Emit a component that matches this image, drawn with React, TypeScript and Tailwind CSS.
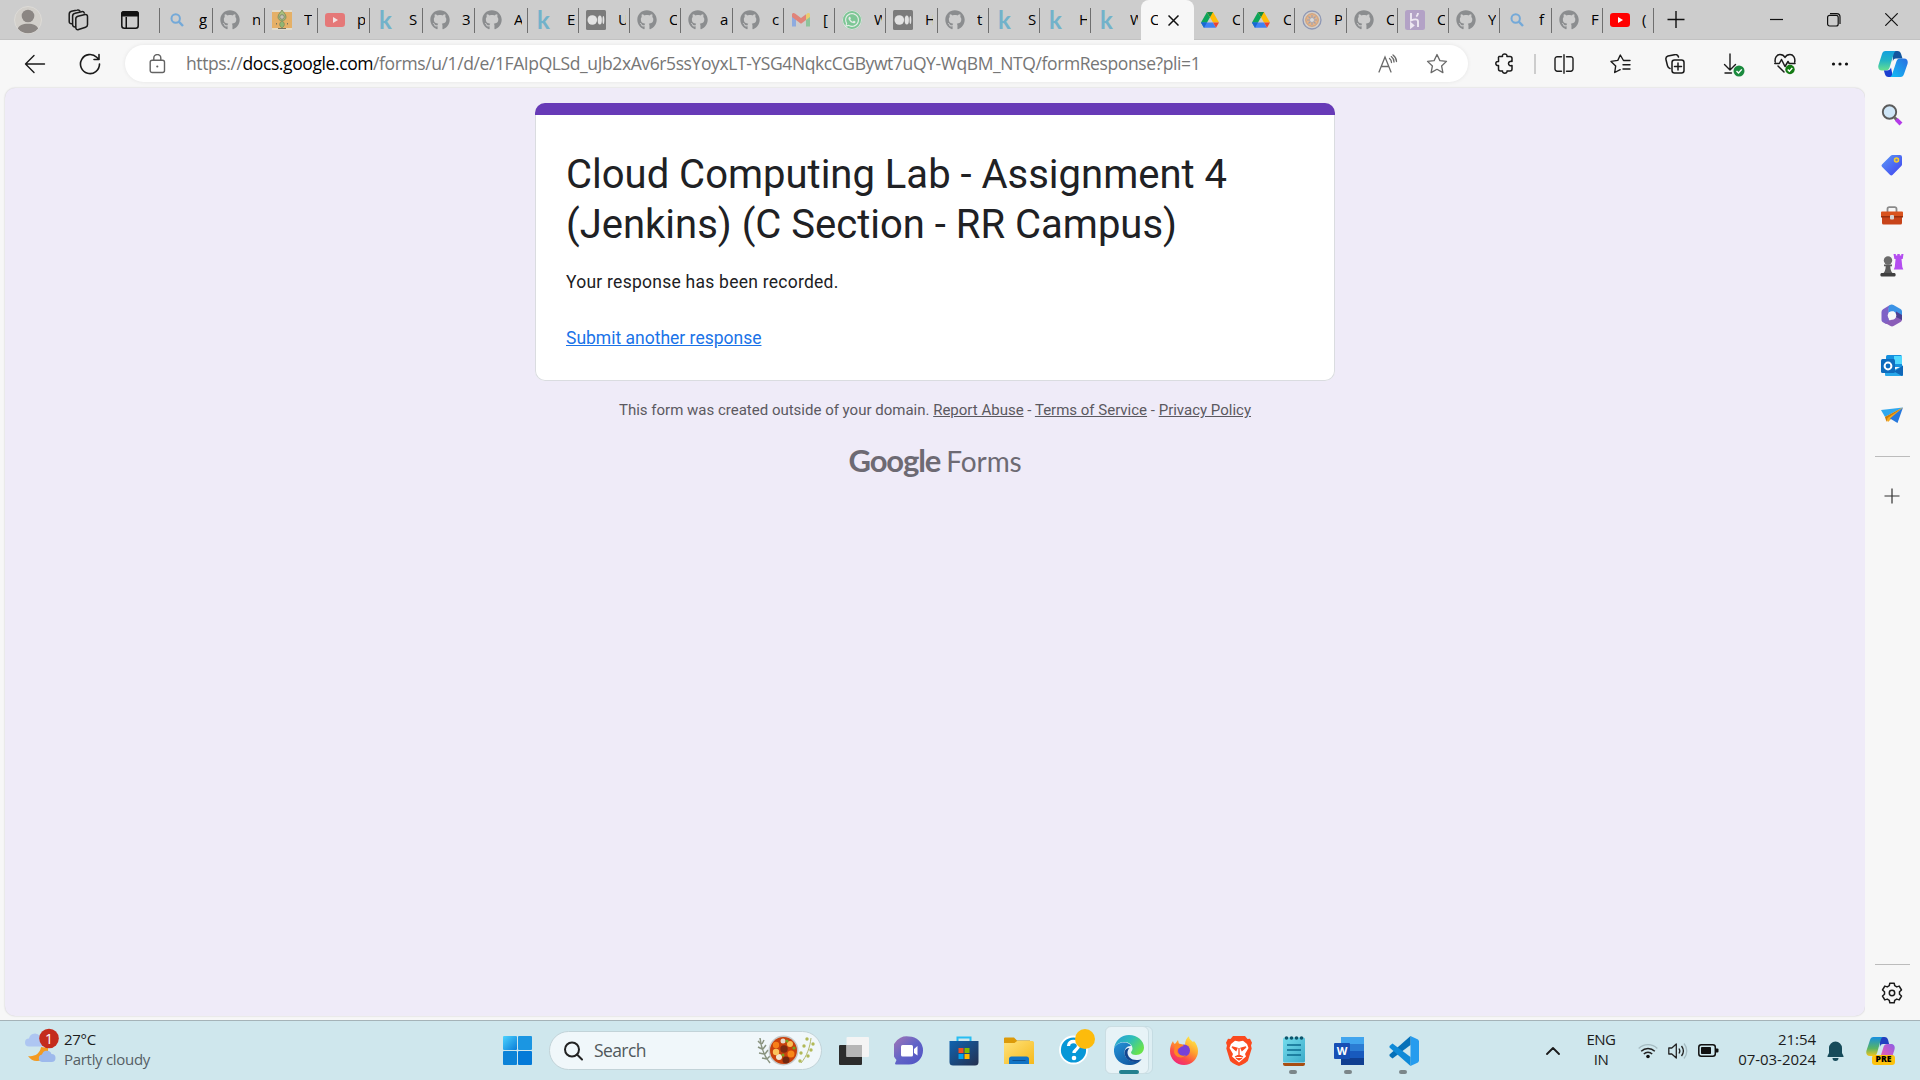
import React from "react";
import { FaGithub, FaWhatsapp } from "react-icons/fa";

type Kind = "search" | "github" | "jenkins" | "youtube" | "youtubeLive" | "k" | "medium" | "gmail" | "whatsapp" | "drive" | "seal" | "heroku";

function Favicon({ kind }: { kind: Kind }) {
  switch (kind) {
    case "search":
      return (
        <svg width="20" height="20" viewBox="0 0 20 20" fill="none" stroke="#74a9d8" strokeWidth="2">
          <circle cx="8.7" cy="8.5" r="4.2" />
          <path d="M11.8 11.6 16 16" strokeWidth="2.4" />
        </svg>
      );
    case "github":
      return <FaGithub size={20} color="#8b8d8f" />;
    case "jenkins":
      return (
        <svg width="20" height="20" viewBox="0 0 20 20">
          <path d="M0 0h20v20H0z" fill="#e3dccb" />
          <path d="M0 2h20v16H0z" fill="#e5b066" />
          <path d="M10 0c-1 2-4 4-4 7 0 2 2 4 4 4s4-2 4-4c0-3-3-5-4-7z" fill="#a9c07b" stroke="#75855b" strokeWidth=".8" />
          <path d="M10 11c-2 1-3 3-2 5l2 2 2-2c1-2 0-4-2-5z" fill="#92b571" stroke="#75855b" strokeWidth=".6" />
          <circle cx="10" cy="7" r="2.3" fill="#c4c3b4" stroke="#777b67" strokeWidth=".8" />
          <path d="M4.500 13v1.500M15.500 13v1.500M6 18.500h8" stroke="#74745f" />
        </svg>
      );
    case "youtube":
      return (
        <svg width="20" height="20" viewBox="0 0 20 20">
          <rect y="3" width="20" height="14" rx="3.2" fill="#e57878" />
          <path d="m8 7 5 3-5 3z" fill="#f4e4e4" />
        </svg>
      );
    case "youtubeLive":
      return (
        <svg width="20" height="20" viewBox="0 0 20 20">
          <rect y="3" width="20" height="14" rx="3.2" fill="#f00" />
          <path d="m8 7 5 3-5 3z" fill="#fff" />
        </svg>
      );
    case "k":
      return <span className="flex h-5 w-5 items-center pl-[2px] font-['Lato'] text-[24px] font-bold leading-none text-[#72b2ca]">k</span>;
    case "medium":
      return (
        <svg width="20" height="20" viewBox="0 0 20 20">
          <rect width="20" height="20" rx="1.5" fill="#7b7b7b" />
          <circle cx="6.3" cy="10" r="4.8" fill="#e2e2e2" />
          <ellipse cx="13.8" cy="10" rx="2.1" ry="4.5" fill="#e2e2e2" />
          <ellipse cx="17.4" cy="10" rx="0.9" ry="4" fill="#e2e2e2" />
        </svg>
      );
    case "gmail":
      return (
        <svg width="20" height="20" viewBox="0 0 20 20">
          <path d="M1 6v10.5h4V9z" fill="#8eabdf" />
          <path d="M19 6v10.5h-4V9z" fill="#8dc39b" />
          <path d="M15 5v5l4-3V4.500c0-1.700-1.800-2-3-1z" fill="#e9cc70" />
          <path d="M1 7V4.500c0-1.700 1.800-2 3-1l6 4.500 5-3.800V10l-5 3.700L5 10z" fill="#e08379" />
        </svg>
      );
    case "whatsapp":
      return (
        <span className="flex h-5 w-5 items-center justify-center rounded-full bg-[#7cc795] ring-1 ring-[#dedede] ring-inset">
          <FaWhatsapp size={16} color="#e6ece8" />
        </span>
      );
    case "drive":
      return (
        <svg width="20" height="20" viewBox="0 0 20 20">
          <path d="M7 2 1 12.500l3 5.300L10 7.200z" fill="#0da55a" />
          <path d="M13 2 19 12.500h-6L7 2z" fill="#ffbc05" />
          <path d="M7 2h6l-3 5.200z" fill="#128a46" />
          <path d="M1 12.500h12l3 5.300H4z" fill="#3f82f4" />
          <path d="M1 12.500h6l-3 5.300z" fill="#1967d2" />
          <path d="M13 12.500h6l-3 5.300z" fill="#ea4335" />
        </svg>
      );
    case "seal":
      return (
        <svg width="20" height="20" viewBox="0 0 20 20">
          <circle cx="10" cy="10" r="9" fill="#d3cec8" stroke="#8d97b5" strokeWidth="1.300" />
          <circle cx="10" cy="10" r="6.300" fill="#e3b48b" stroke="#cf9c74" />
          <path d="M10 5v10M5 10h10M6.500 6.500l7 7M13.500 6.500l-7 7" stroke="#9aa0b4" strokeWidth="1.100" />
          <circle cx="10" cy="10" r="2" fill="#dadada" />
        </svg>
      );
    case "heroku":
      return (
        <svg width="20" height="20" viewBox="0 0 20 20">
          <rect width="20" height="20" rx="2.500" fill="#b3a2c6" />
          <path d="M6 3v7.500c2.500-1.200 7-2.200 7 1V17M13 3c0 1.500-.8 2.800-1.700 3.600M6 13.500l2.300 1.900L6 17.300z" fill="none" stroke="#eee8f2" strokeWidth="1.900" />
        </svg>
      );
  }
}

const leftTabs: [Kind, string, string][] = [
  ["search", "g", "w-[54px]"],
  ["github", "n", "w-[52px]"],
  ["jenkins", "T", "w-[53px]"],
  ["youtube", "p", "w-[52px]"],
  ["k", "S", "w-[53px]"],
  ["github", "3", "w-[52px]"],
  ["github", "A", "w-[53px]"],
  ["k", "E", "w-[51px]"],
  ["medium", "U", "w-[51px]"],
  ["github", "C", "w-[51px]"],
  ["github", "a", "w-[52px]"],
  ["github", "c", "w-[51px]"],
  ["gmail", "[", "w-[51px]"],
  ["whatsapp", "W", "w-[51px]"],
  ["medium", "H", "w-[52px]"],
  ["github", "t", "w-[51px]"],
  ["k", "S", "w-[51px]"],
  ["k", "H", "w-[51px]"],
  ["k", "W", "w-[52px]"],
];
const rightTabs: [Kind, string, string][] = [
  ["drive", "C", "w-[51px]"],
  ["drive", "C", "w-[51px]"],
  ["seal", "P", "w-[52px]"],
  ["github", "C", "w-[51px]"],
  ["heroku", "C", "w-[51px]"],
  ["github", "Y", "w-[51px]"],
  ["search", "f", "w-[52px]"],
  ["github", "F", "w-[51px]"],
  ["youtubeLive", "(", "w-[51px]"],
];

function Tab({ kind, label, width, last }: { kind: Kind; label: string; width: string; last?: boolean }) {
  return (
    <div className={`flex h-[25px] shrink-0 items-start border-r pl-[7px] pt-[2px] ${last ? "border-transparent" : "border-[#6f6f6f]"} ${width}`}>
      <div className="h-5 w-5 shrink-0"><Favicon kind={kind} /></div>
      <span className="-mt-px ml-3 w-2 overflow-hidden whitespace-nowrap text-[15px] leading-5 text-black">{label}</span>
    </div>
  );
}

const line = { fill: "none", stroke: "#1b1b1b", strokeWidth: 1.4, strokeLinecap: "round", strokeLinejoin: "round" } as const;

function TabBar() {
  return (
    <header className="flex h-10 border-b border-[#c2c2c2] bg-[#cdcdcd]">
      <div className="flex w-[160px] items-center">
        <svg className="ml-[14px]" width="28" height="28" viewBox="0 0 28 28">
          <circle cx="14" cy="14" r="13.500" fill="#d2cfca" stroke="#dddbd7" />
          <circle cx="14" cy="10" r="6.300" fill="#8b8683" />
          <path d="M3.800 22.600C5 19.500 8.500 17.800 14 17.800s9 1.700 10.200 4.800A13.300 13.300 0 0 1 14 27.300 13.300 13.300 0 0 1 3.800 22.600z" fill="#8b8683" />
        </svg>
        <svg className="ml-[24px]" width="24" height="24" viewBox="0 0 24 24" {...line} strokeWidth="1.500">
          <path d="M12 8.200 19 6.600c1.500-.3 2.500.4 2.500 2v8.200c0 1.200-.7 2-1.900 2.400l-7 2.300c-1.600.5-2.800-.2-2.800-1.900v-8.800c0-1.400.8-2.300 2.200-2.600z" />
          <path d="M9.500 18.800c-1.800.4-2.900-.6-2.900-2.200V8.200c0-1.600 1-2.700 2.500-3l6.500-1.500c1.300-.3 2.300.2 2.700 1.400" />
          <path d="M6 15.700c-1.700.2-2.800-.7-2.800-2.300V6.200c0-1.500.9-2.500 2.300-2.900L11.300 2c1.200-.3 2.200.1 2.700 1.100" />
        </svg>
        <svg className="ml-[31px]" width="18" height="18" viewBox="0 0 18 18">
          <rect x=".8" y=".8" width="16.400" height="16.400" rx="2.500" fill="none" stroke="#111" strokeWidth="1.500" />
          <path d="M0 5.500V3a3 3 0 0 1 3-3h12a3 3 0 0 1 3 3v2.500zM4.500 5v12H6V5z" fill="#111" />
        </svg>
      </div>
      <div className="flex pt-2">
        <div className="-ml-px h-[25px] w-px bg-[#6f6f6f]" />
        {leftTabs.map(([k, l, w], i) => (
          <Tab key={i} kind={k} label={l} width={i === 0 ? "w-[53px]" : w} last={i === leftTabs.length - 1} />
        ))}
      </div>
      <div className="-ml-[2px] flex h-[41px] w-[53px] items-start rounded-t-lg bg-[#f7f7f7] pl-[9px] pt-[9px]">
        <span className="w-2 overflow-hidden text-[15px] leading-5 text-black">C</span>
        <svg className="ml-[10px] mt-[6px]" width="11" height="11" viewBox="0 0 11 11"><path d="m.5.5 10 10m0-10-10 10" stroke="#111" strokeWidth="1.500" /></svg>
      </div>
      <div className="-ml-px flex pt-2">
        {rightTabs.map(([k, l, w], i) => <Tab key={i} kind={k} label={l} width={w} />)}
      </div>
      <svg className="ml-[13px] mt-[11px]" width="18" height="18" viewBox="0 0 18 18"><path d="M9 0v17M.5 8.500h17" stroke="#111" strokeWidth="1.400" /></svg>
      <div className="ml-auto flex items-center pr-[22px]">
        <svg width="13" height="13" viewBox="0 0 13 13"><path d="M0 6.500h13" stroke="#111" strokeWidth="1.200" /></svg>
        <svg className="ml-[44px]" width="14" height="14" viewBox="0 0 14 14" fill="none" stroke="#111" strokeWidth="1.200">
          <rect x=".6" y="2.400" width="10.600" height="10.600" rx="2" />
          <path d="M3 .7h6.800a3.200 3.200 0 0 1 3.200 3.200V11" />
        </svg>
        <svg className="ml-[44px]" width="13" height="13" viewBox="0 0 13 13"><path d="m.3.3 12.400 12.400m0-12.400L.3 12.700" stroke="#111" strokeWidth="1.200" /></svg>
      </div>
    </header>
  );
}

function CopilotMark({ size }: { size: number }) {
  return (
    <svg width={size} height={size} viewBox="0 0 30 30">
      <defs>
        <linearGradient id="cpA" x1="0" y1="0" x2="0" y2="1"><stop offset="0" stopColor="#13a0dd" /><stop offset=".5" stopColor="#24b5c4" /><stop offset="1" stopColor="#67e08f" /></linearGradient>
        <linearGradient id="cpB" x1="0" y1="1" x2="1" y2="0"><stop offset="0" stopColor="#12c0f5" /><stop offset="1" stopColor="#2a6de0" /></linearGradient>
      </defs>
      <path d="M15 2h4.500c2 0 3 1 3.600 3l1.400 4.500H18c-2 0-2.600 1-3.200 3z" fill="#13569f" />
      <path d="M7.500 2H18c-1.500.6-2 2-2.600 4l-3.800 12.500c-.6 2-1.800 3-3.800 3H4C.8 21.500-.3 19 .5 16L4 5c.6-2 1.600-3 3.500-3z" fill="url(#cpA)" />
      <path d="M15 28h-4.500c-2 0-3-1-3.600-3l-1-3.500H9c2 0 3.400-1 4-3z" fill="#1b3fd0" />
      <path d="M22.500 28H12c1.500-.6 2-2 2.600-4l3.800-11.500c.6-2 1.800-3 3.800-3H26c3.200 0 4.300 2.500 3.500 5.500L26 25c-.6 2-1.600 3-3.500 3z" fill="url(#cpB)" />
    </svg>
  );
}

function ToolButton({ width, children }: { width: string; children: React.ReactNode }) {
  return <div className={`flex h-full shrink-0 items-center justify-center ${width}`}>{children}</div>;
}

function Toolbar() {
  return (
    <div className="flex h-[47px] items-center bg-[#f7f7f7]">
      <ToolButton width="w-[70px]">
        <svg width="22" height="20" viewBox="0 0 22 20" {...line}><path d="M20.500 10H1.500M10 1.500 1.500 10l8.500 8.500" /></svg>
      </ToolButton>
      <ToolButton width="w-10">
        <svg width="22" height="22" viewBox="0 0 22 22" {...line} strokeWidth="1.600"><path d="M20.500 11A9.500 9.500 0 1 1 17.700 4.300L20 6.500M20 1.500v5h-5" /></svg>
      </ToolButton>
      <div className="ml-[15px] flex h-[37px] w-[1343px] items-center rounded-full bg-white shadow-[0_0_4px_rgba(0,0,0,0.08)]">
        <svg className="ml-[24px]" width="17" height="20" viewBox="0 0 17 20" fill="none" stroke="#636363" strokeWidth="1.400">
          <rect x="1.200" y="6.200" width="14.300" height="12.300" rx="2" />
          <path d="M4.800 6V4a3.500 3.500 0 0 1 7 0v2" />
          <circle cx="8.300" cy="12.500" r="1.100" fill="#636363" stroke="none" />
        </svg>
        <span className="-mt-[2px] ml-[20px] w-[1020px] whitespace-nowrap text-[17.5px] leading-6 tracking-[-0.4px] text-[#767676]">
          https://<span className="text-black">docs.google.com</span>/forms/u/1/d/e/1FAIpQLSd_uJb2xAv6r5ssYoyxLT-YSG4NqkcCGBywt7uQY-WqBM_NTQ/formResponse?pli=1
        </span>
        <div className="ml-auto flex items-center gap-[28px] pr-[20px]">
          <svg width="20" height="20" viewBox="0 0 20 20" fill="none" stroke="#6a6a6a" strokeWidth="1.300" strokeLinecap="round">
            <path d="M1 18 7 3l6 15M3.200 12.500h7.600M11.500 4.500c1.300 1 2 2.400 2 4M13.300 2.600c1.700 1.300 2.700 3.200 2.700 5.400M15 1c2.200 1.700 3.500 4 3.500 6.500" />
          </svg>
          <svg width="22" height="22" viewBox="0 0 22 22" fill="none" stroke="#6a6a6a" strokeWidth="1.300" strokeLinejoin="round">
            <path d="m11 1.500 2.900 6.100 6.600.8-4.900 4.600 1.300 6.600-5.900-3.300-5.900 3.300L6.400 13 1.500 8.400l6.600-.8z" />
          </svg>
        </div>
      </div>
      <ToolButton width="w-[66px]">
        <svg className="ml-[7px]" width="20" height="21" viewBox="0 0 20 21" {...line} strokeWidth="1.500">
          <path d="M4 3.500h3.500C7 1.500 8.500.9 9.700.9s2.700.6 2.200 2.600H15a2 2 0 0 1 2 2v3c-2-.5-3.500.5-3.500 2s1.500 2.600 3.500 2v3.500a2 2 0 0 1-2 2h-3c.4 1.500-1 2.200-2.200 2.200S7.200 19.500 7.500 18H5.500a2 2 0 0 1-2-2v-3.500c-1.700.3-2.700-.8-2.700-2s1-2.300 2.700-2V5.500a2 2 0 0 1 .5-2z" />
        </svg>
      </ToolButton>
      <div className="h-5 w-[2px] bg-[#cdcdcd]" />
      <ToolButton width="w-14">
        <svg width="20" height="20" viewBox="0 0 20 20" {...line}><path d="M10 .7v18.600M7.500 2.700H3.200A2.200 2.200 0 0 0 1 5v10a2.200 2.200 0 0 0 2.200 2.200h4.300M12.500 2.700h4.300A2.200 2.200 0 0 1 19 5v10a2.200 2.200 0 0 1-2.200 2.200h-4.300" /></svg>
      </ToolButton>
      <ToolButton width="w-14">
        <svg width="21" height="20" viewBox="0 0 21 20" {...line}><path d="M20 6.500h-6.500L10.300 1 7.800 6.400 1 7.400l4.700 4.500-1 6.600 5.500-2.800M13 10.800h7M13 15h7" /></svg>
      </ToolButton>
      <ToolButton width="w-[54px]">
        <svg width="20" height="20" viewBox="0 0 20 20" {...line} strokeWidth="1.500"><rect x="7" y="6" width="12" height="13" rx="2.500" /><path d="M13 9v7M9.500 12.500h7M5 14.500C3.300 14 2.800 12.800 2.500 11.700L1 5.700C.6 4 1.500 2.500 3 2l6.500-1.300C11.500.3 13 1 13.500 3" /></svg>
      </ToolButton>
      <ToolButton width="w-14">
        <svg className="ml-[7px] mt-[3px]" width="22" height="24" viewBox="0 0 22 24">
          <path d="M7 1v16M1.500 11.500 7 17l5.500-5.500M2 20h6.500" {...line} />
          <circle cx="16" cy="18" r="5.500" fill="#1b8a3e" /><path d="m13.500 18 2 2 3.300-3.600" fill="none" stroke="#fff" strokeWidth="1.400" />
        </svg>
      </ToolButton>
      <ToolButton width="w-[54px]">
        <svg width="22" height="22" viewBox="0 0 22 22">
          <path d="M1.200 9C.5 4.500 3 1.500 6 1.500c2.200 0 4 1 5 3 1-2 2.800-3 5-3 3 0 5.500 3 4.700 7.500M.8 10.500h4.500l2.200-4 3.500 7 3-5 1.200 2H21M4 13l6 6" {...line} strokeWidth="1.500" />
          <circle cx="16" cy="16.500" r="4.700" fill="#137a13" /><path d="m13.700 16.500 1.700 1.700 2.900-3.200" fill="none" stroke="#fff" strokeWidth="1.400" />
        </svg>
      </ToolButton>
      <ToolButton width="w-14">
        <svg width="18" height="4" viewBox="0 0 18 4" fill="#111"><circle cx="2.500" cy="2" r="1.600" /><circle cx="9" cy="2" r="1.600" /><circle cx="15.500" cy="2" r="1.600" /></svg>
      </ToolButton>
      <ToolButton width="w-[50px]"><CopilotMark size={30} /></ToolButton>
    </div>
  );
}

function SideCell({ children }: { children: React.ReactNode }) {
  return <div className="flex h-[50px] items-center justify-center pr-px">{children}</div>;
}

function Sidebar() {
  return (
    <aside className="flex w-[55px] flex-col bg-[#f7f7f7] pt-[3px]">
      <SideCell>
        <svg width="22" height="22" viewBox="0 0 22 22">
          <path d="m13.500 13.500 2.500 2.500" stroke="#6b6b6b" strokeWidth="3" /><path d="m15.300 15.300 4.700 4.700" stroke="#b43be8" strokeWidth="4" />
          <circle cx="8.500" cy="8" r="6.700" fill="#cfe6f7" stroke="#5b5b5b" strokeWidth="1.900" />
        </svg>
      </SideCell>
      <SideCell>
        <svg width="22" height="22" viewBox="0 0 22 22">
          <defs><linearGradient id="tg" x1="0" y1="0" x2="1" y2="1"><stop stopColor="#5b9bf5" /><stop offset="1" stopColor="#4040f0" /></linearGradient></defs>
          <path d="M11.500 1H19a2 2 0 0 1 2 2v7.500a2 2 0 0 1-.7 1.500l-8.600 8.700a2 2 0 0 1-2.800 0L1.200 13a2 2 0 0 1 0-2.800L10 1.600A2 2 0 0 1 11.500 1z" fill="url(#tg)" />
          <circle cx="15.500" cy="6" r="2" fill="#7b86b8" stroke="#f8cf28" strokeWidth="1.500" />
        </svg>
      </SideCell>
      <SideCell>
        <svg className="mt-[2px]" width="24" height="20" viewBox="0 0 24 20">
          <path d="M7.500 6V3a1.800 1.800 0 0 1 1.800-1.800h5.400A1.800 1.800 0 0 1 16.500 3v3" fill="none" stroke="#8a8a8a" strokeWidth="1.800" />
          <path d="M2 8h20v9a1.500 1.500 0 0 1-1.500 1.500h-17A1.500 1.500 0 0 1 2 17z" fill="#c8441a" />
          <path d="M2 5.500h20a1 1 0 0 1 1 1V11H1V6.500a1 1 0 0 1 1-1z" fill="#d9531e" /><path d="M1 10h22v1.500H1z" fill="#98300f" />
          <rect x="10" y="9" width="4" height="4.500" rx="1" fill="#d4d4d4" />
        </svg>
      </SideCell>
      <SideCell>
        <svg width="24" height="24" viewBox="0 0 24 24">
          <path d="M13.500 1h2.300v1.500h1.500V1h2.500v1.500h1.500V1h2.200l-.8 5h-1.200l.8 8 1 2.500h-9.500l1-2.500.8-8h-1.200z" fill="#b44df0" />
          <circle cx="8" cy="7.500" r="4.200" fill="#6b6b6b" /><path d="M4 11.500h8v1.700h-1.700c0 3 .7 5 2.200 6.800h-9c1.500-1.800 2.200-3.800 2.200-6.800H4z" fill="#5a5a5a" /><rect x=".5" y="20" width="15" height="3.500" rx="1.200" fill="#3f3f3f" />
        </svg>
      </SideCell>
      <SideCell>
        <svg className="mt-px" width="22" height="23" viewBox="0 0 22 23">
          <path d="M8.500 1.300 13 .9 7.800 4v11.500L11 19l-6 1-3.500-2A3 3 0 0 1 .5 15.500V8A3.500 3.500 0 0 1 2 5.200z" fill="#7e62c6" />
          <path d="M9.500.8a3 3 0 0 1 3 .1l7 4A3 3 0 0 1 21 7.500V15l-6-4-2-3.500-5.500 1V3.500c0-1.200.9-2.100 2-2.700z" fill="#3b93e6" />
          <path d="M21 12v3.500a3 3 0 0 1-1.500 2.600l-7 4c-1 .6-2 .6-3 0L2 17.800c1.500 1 3.500.8 5-.2l7-4 1-6.100z" fill="#8a5db8" />
          <path d="M15 7.500V13l6 3V11z" fill="#4c3f90" />
          <circle cx="11" cy="11.500" r="4.300" fill="#f7f7f7" />
        </svg>
      </SideCell>
      <SideCell>
        <svg className="mt-px" width="22" height="22" viewBox="0 0 22 22">
          <path d="M5 1.500A1.500 1.500 0 0 1 6.500 0h13A1.500 1.500 0 0 1 21 1.500V12H5z" fill="#1490df" /><path d="M13 1h8v8h-8z" fill="#50d9ff" /><path d="M5 4h8v8H5z" fill="#0364b8" />
          <path d="M4 20.500V11l9 4 9-4.500v9a1.500 1.500 0 0 1-1.500 1.500H5z" fill="#28a8ea" /><path d="m22 10.500-9 6 8 4.500a1.500 1.500 0 0 0 1-1.500z" fill="#1067b8" />
          <rect y="4" width="14" height="14" rx="1.500" fill="#0f6cbd" /><circle cx="7" cy="11" r="3.400" fill="none" stroke="#fff" strokeWidth="2" />
        </svg>
      </SideCell>
      <SideCell>
        <svg width="22" height="18" viewBox="0 0 22 18">
          <path d="M0 4 22 1.500 4 11z" fill="#30a8ee" /><path d="m4 11 18-9.500L7 16z" fill="#f5a81c" /><path d="M4 11 22 1.500 6.500 12 5.500 16z" fill="#c87a0c" /><path d="M9 12.500 22 1.500 16.500 17z" fill="#2678dc" />
        </svg>
      </SideCell>
      <div className="ml-[10px] mt-4 h-px w-[35px] bg-[#bcbcbc]" />
      <svg className="ml-[19px] mt-[31px]" width="16" height="16" viewBox="0 0 16 16"><path d="M8 .5v15M.5 8h15" stroke="#303030" strokeWidth="1.200" /></svg>
      <div className="ml-[10px] mt-auto h-px w-[35px] bg-[#bcbcbc]" />
      <svg className="mb-[16px] ml-[16px] mt-[17px]" width="22" height="22" viewBox="0 0 22 22" {...line} strokeWidth="1.500">
        <path d="m8.800 1.200-.5 2.500-2 1.200-2.500-.8-2.300 3.900L3.500 9.700v2.600L1.500 14l2.300 3.900 2.500-.8 2 1.200.5 2.500h4.400l.5-2.500 2-1.200 2.500.8 2.300-3.900-2-1.700V9.700l2-1.700-2.300-3.900-2.500.8-2-1.200-.5-2.500z" />
        <circle cx="11" cy="11" r="2.700" />
      </svg>
    </aside>
  );
}

function FormPage() {
  return (
    <main className="mb-1 ml-[5px] mt-px flex w-[1860px] flex-col items-center rounded-[10px] bg-[#efebf8] pt-[15px] font-['Roboto',sans-serif] shadow-[0_0_2px_rgba(0,0,0,0.2)]">
      <section className="h-[278px] w-[800px] rounded-[10px] bg-white shadow-[inset_0_0_0_1px_#dadce0]">
        <div className="h-3 rounded-t-[10px] bg-[#673ab7]" />
        <div className="px-[31px] pt-[35px]">
          <h1 className="text-[40px] leading-[50px] text-[#202124]">Cloud Computing Lab - Assignment 4<br />(Jenkins) (C Section - RR Campus)</h1>
          <p className="mt-[20px] text-[17.5px] leading-[25px] tracking-[0.25px] text-[#202124]">Your response has been recorded.</p>
          <a className="mt-[31px] block text-[17.5px] leading-[25px] text-[#1a73e8] underline">Submit another response</a>
        </div>
      </section>
      <p className="mt-[19px] whitespace-pre text-[15px] leading-5 text-[#5b5960]">
        This form was created outside of your domain. <a className="underline">Report Abuse</a> - <a className="underline">Terms of Service</a> - <a className="underline">Privacy Policy</a>
      </p>
      <div className="mt-[20px] flex items-baseline font-['Lato',sans-serif] leading-[40px] text-[#6d6a73]">
        <span className="text-[31px] font-bold tracking-[-1.1px]">Google</span>
        <span className="ml-[6px] text-[28px] tracking-[-0.1px]">Forms</span>
      </div>
    </main>
  );
}

function TaskCell({ children, dot }: { children: React.ReactNode; dot?: boolean }) {
  return (
    <div className="relative flex h-full w-[55px] items-center justify-center">
      {children}
      {dot && <span className="absolute bottom-[6px] left-[23px] h-1 w-2 rounded-full bg-[#7b8689]" />}
    </div>
  );
}

function FoodArt() {
  return (
    <svg width="58" height="32" viewBox="0 0 58 32">
      <path d="M3 3c1 9 4 18 10 25M4 9 1 6m4 8-4-2m6 7-5-1m8 6-5-1M5 9l2-4m-1 9 3-4m-1 9 3-4m-1 9 3-3" stroke="#8a9480" strokeWidth="1.500" fill="none" />
      <path d="M54 3c-1 9-4 18-10 25" stroke="#b3b86c" fill="none" />
      <g fill="#b1b957"><circle cx="50" cy="4" r="1.700" /><circle cx="56" cy="9" r="1.700" /><circle cx="47" cy="11" r="1.700" /><circle cx="54" cy="15" r="1.700" /><circle cx="44" cy="18" r="1.700" /><circle cx="51" cy="21" r="1.700" /><circle cx="43" cy="26" r="1.700" /></g>
      <circle cx="26.500" cy="15.500" r="15" fill="#c4c8c8" /><circle cx="26.500" cy="15.500" r="13.500" fill="#c9410d" />
      <circle cx="19" cy="10" r="3.200" fill="#f77f18" /><circle cx="34" cy="19" r="3.500" fill="#f88718" /><circle cx="22" cy="22" r="3" fill="#f3e6cf" /><circle cx="26" cy="6" r="2.500" fill="#e6dccb" /><circle cx="33" cy="9" r="3" fill="#f9bd52" /><circle cx="19" cy="17" r="3.200" fill="#fbc35c" /><circle cx="27" cy="14" r="3.700" fill="#7d2b11" /><circle cx="29" cy="25" r="3.500" fill="#72270f" /><circle cx="30" cy="6" r="1.500" fill="#77a51d" /><circle cx="37" cy="13" r="1.600" fill="#77a51d" /><circle cx="26" cy="20" r="1.500" fill="#77a51d" />
    </svg>
  );
}

function Taskbar() {
  return (
    <footer className="flex h-[60px] items-center border-t border-[#a5b3b8] bg-[#cfe7ed] text-[15px] text-[#1c1c1c]">
      <div className="flex w-[503px] items-center pl-[25px]">
        <svg width="34" height="38" viewBox="0 0 34 38" className="-mt-3">
          <path d="M23 14c1 7-4 13-11 13-4 0-7-2-9-5 6 1 12-2 13-9z" fill="#f39a21" transform="translate(0 8)" />
          <path d="M4 20.500a4 4 0 0 1 0-8 6 6 0 0 1 11-2 5 5 0 0 1 3 10z" fill="#aec6f2" />
          <path d="M17 36a3.800 3.800 0 0 1 0-7.500 5 5 0 0 1 9.500-.5 4 4 0 0 1 0 8z" fill="#9db9ec" />
          <circle cx="24" cy="12.500" r="9.800" fill="#c42b1c" />
          <text x="24" y="17.500" fill="#fff" fontSize="14" textAnchor="middle" fontFamily="Open Sans">1</text>
        </svg>
        <div className="-mt-1 ml-[5px] leading-5">
          <div className="tracking-[-0.3px]">27°C</div>
          <div className="tracking-[-0.3px] text-[#566065]">Partly cloudy</div>
        </div>
      </div>
      <svg width="29" height="29" viewBox="0 0 29 29">
        <defs><linearGradient id="win" x1="0" y1="0" x2="1" y2="1"><stop stopColor="#4cd3ff" /><stop offset="1" stopColor="#0a7dd8" /></linearGradient></defs>
        <rect width="14" height="14" rx="1" fill="url(#win)" /><rect x="15" width="14" height="14" rx="1" fill="#1b96e2" /><rect y="15" width="14" height="14" rx="1" fill="#0c83d8" /><rect x="15" y="15" width="14" height="14" rx="1" fill="#047ad8" />
      </svg>
      <div className="ml-[17px] flex h-[39px] w-[273px] items-center rounded-full border border-[#c2d3d8] bg-[#f0f7fa] pl-[13px] pr-[6px]">
        <svg width="20" height="20" viewBox="0 0 20 20" fill="none" stroke="#222" strokeWidth="2"><circle cx="9" cy="8.500" r="7" /><path d="m14 13.500 5 5" strokeLinecap="round" /></svg>
        <span className="-mt-[2px] ml-[11px] text-[17.5px] leading-6 tracking-[-0.6px] text-[#50595c]">Search</span>
        <div className="ml-auto"><FoodArt /></div>
      </div>
      <div className="ml-[4px] flex h-full">
        <TaskCell>
          <svg width="30" height="28" viewBox="0 0 30 28"><rect y="8" width="23" height="20" rx="1" fill="#2c2c2c" /><rect x="7.500" width="22.500" height="20" rx="1" fill="#f4f4f4" /><path d="M7.500 8H23v12H7.500z" fill="#b6b6b6" /></svg>
        </TaskCell>
        <TaskCell>
          <svg width="30" height="29" viewBox="0 0 30 29">
            <defs><linearGradient id="ch" x1="0" y1="0" x2="1" y2="1"><stop stopColor="#a877b4" /><stop offset=".5" stopColor="#6264c7" /><stop offset="1" stopColor="#4f52c4" /></linearGradient></defs>
            <path d="M15 .5a14 14 0 1 1 0 28H2c-1 0-1.200-1-.7-1.700L2.500 24A14 14 0 0 1 15 .5z" fill="url(#ch)" /><rect x="7" y="9" width="12" height="11.500" rx="1.500" fill="#fff" /><path d="m20 13 3.500-3v9.500L20 17z" fill="#fff" />
          </svg>
        </TaskCell>
        <TaskCell>
          <svg width="30" height="30" viewBox="0 0 30 30">
            <defs><linearGradient id="st" x1="0" y1="0" x2="1" y2="1"><stop stopColor="#0f63b0" /><stop offset="1" stopColor="#253150" /></linearGradient></defs>
            <path d="M8.500 6V1.500h13V6" fill="none" stroke="#27bdf2" strokeWidth="2" /><path d="M.5 5h29v21a3.500 3.500 0 0 1-3.500 3.500H4A3.500 3.500 0 0 1 .5 26z" fill="url(#st)" />
            <path d="M9.500 12h5v5h-5z" fill="#f25022" /><path d="M15.500 12h5v5h-5z" fill="#7fba00" /><path d="M9.500 18h5v5h-5z" fill="#00a4ef" /><path d="M15.500 18h5v5h-5z" fill="#ffb900" />
          </svg>
        </TaskCell>
        <TaskCell>
          <svg width="30" height="28" viewBox="0 0 30 28">
            <defs><linearGradient id="fo" x1="0" y1="0" x2="1" y2="1"><stop stopColor="#ffe27a" /><stop offset="1" stopColor="#f6b91b" /></linearGradient></defs>
            <path d="M0 1.500A1 1 0 0 1 1 .5h9l3 3H26V10H0z" fill="#dc9a09" /><path d="M0 6h10.500L13 4h15.500A1.500 1.500 0 0 1 30 5.500V27H0z" fill="url(#fo)" /><path d="M5 22a2.500 2.500 0 0 1 2.500-2.500h15A2.500 2.500 0 0 1 25 22v5H5z" fill="#1174c5" /><path d="M8.500 23.500h13" stroke="#0b4e90" />
          </svg>
        </TaskCell>
        <TaskCell>
          <svg width="36" height="36" viewBox="0 0 36 36" className="-mt-2 ml-[6px]"><circle cx="14.500" cy="21" r="13.500" fill="#0797d7" stroke="#fff" strokeWidth="1.800" /><path d="M9.500 17c0-6 10-6 10 0 0 3.500-4.500 3.500-4.500 7" fill="none" stroke="#fff" strokeWidth="3.300" /><circle cx="15" cy="29" r="2.300" fill="#fff" /><circle cx="26" cy="10" r="10" fill="#fdbb0c" /></svg>
        </TaskCell>
        <div className="relative flex h-full w-[55px] items-center">
          <div className="absolute left-[4px] top-[5px] h-12 w-12 rounded-md border border-[#c5dce3] bg-[#ddeef3]" />
          <div className="absolute left-[4px] top-[5px] flex h-12 w-11 items-center justify-center rounded-md border border-[#cbdee3] bg-[#e7f3f7]">
            <svg className="ml-[3px]" width="30" height="30" viewBox="0 0 30 30">
              <defs>
                <linearGradient id="e1" x1="0" y1="0" x2="1" y2=".6"><stop stopColor="#2899da" /><stop offset=".5" stopColor="#2dbdbb" /><stop offset="1" stopColor="#69e34c" /></linearGradient>
                <linearGradient id="e2" x1="0" y1="0" x2="1" y2="1"><stop stopColor="#2594d8" /><stop offset="1" stopColor="#0c4b95" /></linearGradient>
              </defs>
              <path d="M0 14C.8 6 7 0 15 0c8.500 0 15 6 15 12.500 0 4.500-3.500 7.500-8 7.500-3.500 0-5-1.400-5-2.500 0-1 1.500-1.500 1.500-4C18.500 10 15 7 10.500 7 5 7 1 10 0 14z" fill="url(#e1)" />
              <path d="M0 14C1 10 5 7.500 10 7.500c4 0 6.500 2 7 3.500-4-.5-6.500 3-6.500 6.500 0 6 5.500 9 10 9 3 0 5-1 7-2.300C25 28 20.500 30 15 30 6 30-.8 23 0 14z" fill="url(#e2)" />
              <path d="M10.500 17.500c0 6 5.500 9.500 10.500 9.500 3 0 5.500-1.500 6.800-3-1.200.7-3.300 1-5.300 1-5.500 0-9-3.500-9-7.500 0-2 1-3.500 2-4.500-3 0-5 2-5 4.500z" fill="#12468f" />
            </svg>
          </div>
          <span className="absolute bottom-[6px] left-[18px] h-1 w-5 rounded-full bg-[#23808f]" />
        </div>
        <TaskCell>
          <svg width="28" height="29" viewBox="0 0 28 29">
            <defs><linearGradient id="ff" x1=".8" y1="0" x2=".2" y2="1"><stop stopColor="#fff04a" /><stop offset=".4" stopColor="#ffa02f" /><stop offset=".7" stopColor="#fc4d47" /><stop offset="1" stopColor="#ed1f86" /></linearGradient></defs>
            <path d="M3 5c.5 2 1 2.500 2 3l3-4 1 4 6 1c0-4 1.500-7 4-8.700 0 3 2 4 4 5.700l1-1c2.500 3 4 6 4 10a14 14 0 1 1-28 0C0 11 1 8 3 5z" fill="url(#ff)" /><circle cx="14" cy="14.500" r="6" fill="#7741d8" /><path d="M5 8c4-1 7 0 9 2-4 0-4 3-7 3-1 5 5 8 9 6-3 4-11 3-12-3z" fill="#ff8726" />
          </svg>
        </TaskCell>
        <TaskCell>
          <svg width="26" height="30" viewBox="0 0 26 30">
            <path d="M7 0h12l2.500 3L24 2.800l2 4-1 2.700.7 3-3.700 12c-.5 1.500-6 4.500-9 5.500-3-1-8.500-4-9-5.500l-3.700-12 .7-3-1-2.700 2-4L4.500 3z" fill="#fb4a1f" />
            <path d="M13 5.500 9 4.800 5 8l-1.500 4L7 18l-1 2.500 7 6 7-6-1-2.500 3.500-6L21 8l-4-3.200z" fill="#fff" />
            <path d="m6 11 5 1.200-1 2.300zm14 0-5 1.200 1 2.300zM13 12v7m-4 2 4-2 4 2m-7 1 3 2 3-2" fill="#fb4a1f" stroke="#fb4a1f" strokeWidth="1.300" />
          </svg>
        </TaskCell>
        <TaskCell dot>
          <svg width="22" height="30" viewBox="0 0 22 30">
            <defs><linearGradient id="np" x1="0" y1="0" x2="1" y2="1"><stop stopColor="#74dcec" /><stop offset="1" stopColor="#3cabc9" /></linearGradient></defs>
            <path d="M0 27h22v1a2 2 0 0 1-2 2H2a2 2 0 0 1-2-2z" fill="#a84e12" /><rect y="1.500" width="22" height="25" rx="1.500" fill="url(#np)" /><g fill="#0e566c"><circle cx="3.500" cy="2" r="1.800" /><circle cx="8.500" cy="2" r="1.800" /><circle cx="13.500" cy="2" r="1.800" /><circle cx="18.500" cy="2" r="1.800" /></g><path d="M4 9h14M4 14h14M4 19h14" stroke="#0c6b8e" strokeWidth="1.600" />
          </svg>
        </TaskCell>
        <TaskCell dot>
          <svg width="30" height="28" viewBox="0 0 30 28">
            <path d="M7 0h23v7H7z" fill="#41a5ee" /><path d="M7 7h23v7H7z" fill="#2b7cd3" /><path d="M7 14h23v7H7z" fill="#185abd" /><path d="M7 21h23v7H7z" fill="#103f91" /><rect y="6" width="16" height="16" rx="1" fill="#174fb5" />
            <text x="8" y="18" fill="#fff" fontSize="11" fontWeight="700" textAnchor="middle" fontFamily="Open Sans">W</text>
          </svg>
        </TaskCell>
        <TaskCell dot>
          <svg width="30" height="30" viewBox="0 0 30 30">
            <path d="M21.500 0 29 3.500 30 5v20l-1 1.500L21.500 30z" fill="#269cee" /><path d="M21.500 0v9L3.500 22.500l-3-2.500v-1.500z" fill="#0570b8" /><path d="M21.500 30v-9L3.500 7.500l-3 2.500v1.500z" fill="#0f8ad8" />
          </svg>
        </TaskCell>
      </div>
      <div className="ml-auto flex items-center">
        <svg width="14" height="8" viewBox="0 0 14 8" {...line} strokeWidth="1.800"><path d="m1 7 6-6 6 6" /></svg>
        <div className="-mt-[3px] ml-[22px] w-[38px] text-center leading-5 tracking-[-0.5px]">ENG<br />IN</div>
        <svg className="ml-[18px]" width="20" height="16" viewBox="0 0 20 16" fill="none" stroke="#222" strokeWidth="1.400"><path d="M.7 5.500a13 13 0 0 1 18.600 0" stroke="#a6bcc2" /><path d="M3.200 8.300a9.500 9.500 0 0 1 13.600 0M5.800 11a6 6 0 0 1 8.400 0" /><circle cx="10" cy="13.500" r="1.800" fill="#111" stroke="none" /></svg>
        <svg className="ml-[10px]" width="20" height="18" viewBox="0 0 20 18" fill="none" stroke="#222" strokeWidth="1.300" strokeLinejoin="round"><path d="M.8 6v6h3L8.300 16V2L3.800 6zM11 6.500c1 1.500 1 3.500 0 5M13.500 4c2.300 3 2.300 7 0 10" /><path d="M16 1.500c3.700 4.500 3.700 10.500 0 15" stroke="#a6bcc2" /></svg>
        <svg className="ml-[10px]" width="21" height="13" viewBox="0 0 21 13"><rect x=".8" y=".8" width="16.500" height="11.400" rx="2.500" fill="none" stroke="#111" strokeWidth="1.500" /><rect x="3" y="3" width="10" height="7" rx=".8" fill="#111" /><path d="M18 4.500h1.500a1 1 0 0 1 1 1v2a1 1 0 0 1-1 1H18z" fill="#111" /></svg>
        <div className="-mt-1 ml-[17px] w-[80px] whitespace-nowrap text-right leading-5 tracking-[-0.05px]">21:54<br />07-03-2024</div>
        <svg className="ml-[11px]" width="17" height="20" viewBox="0 0 17 20" fill="#174b5a"><path d="M8.500.5a6.500 6.500 0 0 1 6.500 6.500v5l1.500 3v1H.5v-1L2 12V7A6.500 6.500 0 0 1 8.500.5zM5.500 17h6a3 3 0 0 1-6 0z" /></svg>
        <div className="relative ml-[22px] mr-6 h-[30px] w-[30px]">
          <svg width="30" height="30" viewBox="0 0 30 30">
            <defs>
              <linearGradient id="pA" x1="0" y1="0" x2="0" y2="1"><stop stopColor="#168fe0" /><stop offset=".6" stopColor="#59b464" /><stop offset="1" stopColor="#f1c51f" /></linearGradient>
              <linearGradient id="pB" x1="1" y1="0" x2="0" y2="1"><stop stopColor="#8a5ee5" /><stop offset=".5" stopColor="#d05bc6" /><stop offset="1" stopColor="#f86f6d" /></linearGradient>
            </defs>
            <path d="M14 1h4.500c2 0 3 1 3.600 3l1 4h-6c-2 0-2.600 1-3.200 3z" fill="#213fc0" /><path d="M7.500 1H17c-1.500.6-2 2-2.600 4l-3.300 12c-.6 2-1.800 3-3.800 3H4c-3.200 0-4.300-2.500-3.500-5.500L4 4c.6-2 1.600-3 3.500-3z" fill="url(#pA)" /><path d="M22 26H11.500c1.500-.6 2-2 2.600-4L17.500 11c.6-2 1.800-3 3.800-3H25c3.200 0 4.300 2.500 3.500 5.500L25.500 23c-.6 2-1.600 3-3.500 3z" fill="url(#pB)" />
          </svg>
          <span className="absolute left-[6px] top-[19px] flex h-[10px] w-[23px] items-center justify-center rounded-[3px] bg-[#fdc20c] text-[8.5px] font-extrabold leading-none text-black">PRE</span>
        </div>
      </div>
    </footer>
  );
}

export default function App() {
  return (
    <div className="flex h-[1080px] w-[1920px] flex-col overflow-hidden bg-[#f7f7f7] font-['Open_Sans',sans-serif]">
      <TabBar />
      <Toolbar />
      <div className="flex min-h-0 flex-1">
        <FormPage />
        <Sidebar />
      </div>
      <Taskbar />
    </div>
  );
}
